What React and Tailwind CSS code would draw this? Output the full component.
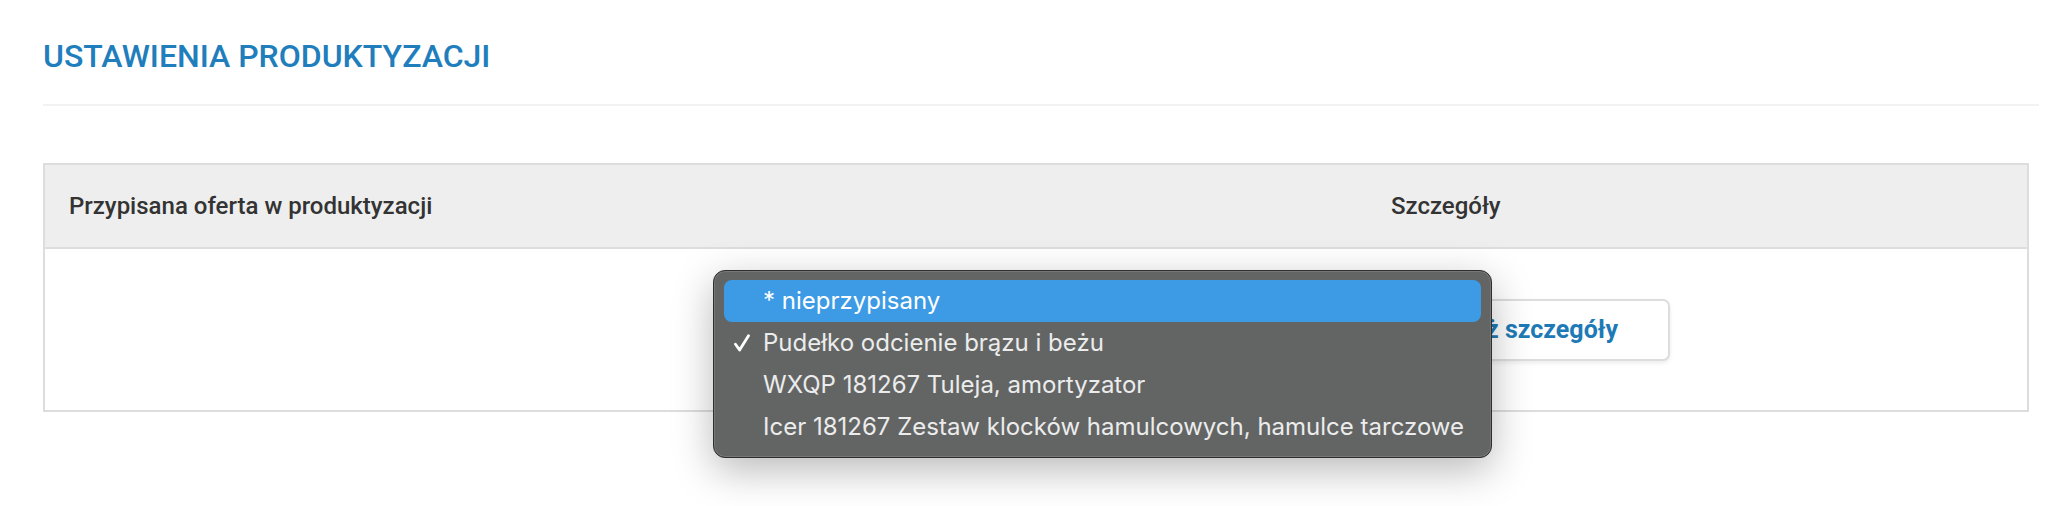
import React from "react";

const items = [
  { label: "* nieprzypisany", active: true },
  { label: "Pudełko odcienie brązu i beżu", checked: true },
  { label: "WXQP 181267 Tuleja, amortyzator" },
  { label: "Icer 181267 Zestaw klocków hamulcowych, hamulce tarczowe" },
];

function Check() {
  return (
    <svg width="18" height="18" viewBox="0 0 18 18" fill="none">
      <path d="M2.5 10.2 L6.6 16 L15.5 1.8" stroke="#ffffff" strokeWidth="2.8" strokeLinecap="round" strokeLinejoin="round" />
    </svg>
  );
}

export default function App() {
  return (
    <div className="relative w-[2072px] h-[506px] bg-white font-['Roboto',sans-serif] overflow-hidden">
      <div className="pl-[43px] pr-[33px] pt-[37px]">
        <h1 className="text-[32px] leading-[38px] font-medium text-[#217ebc]">USTAWIENIA PRODUKTYZACJI</h1>
        <div className="mt-[29px] border-t-2 border-[#f2f2f2]" />
        <div className="mt-[57px] mr-[10px] border-2 border-[#dddddd]">
          <div className="flex h-[84px] items-center bg-[#eeeeee] border-b-2 border-[#dddddd] text-[24px] leading-[30px] font-medium text-[#333333]">
            <div className="w-[1322px] pl-[24px]">Przypisana oferta w produktyzacji</div>
            <div className="flex-1 pl-[24px]">Szczegóły</div>
          </div>
          <div className="flex h-[161px] items-center">
            <div className="w-[1322px]" />
            <div className="flex-1 pl-[24px]">
              <button className="flex h-[62px] w-[279px] items-center justify-end rounded-[7px] border-2 border-[#dddddd] bg-white pr-[50px] text-[25px] font-bold text-[#1e7ab6] shadow-[0_2px_4px_rgba(0,0,0,0.08)]">
                Pokaż szczegóły
              </button>
            </div>
          </div>
        </div>
      </div>

      <div className="absolute left-[713px] top-[270px] w-[779px] h-[188px] rounded-[12px] border border-[#2e2e2e] bg-[#636565] px-[10px] py-[9px] shadow-[0_12px_40px_rgba(0,0,0,0.28),inset_0_0_0_1px_rgba(255,255,255,0.12)] font-['Inter',sans-serif]">
        {items.map((it, i) => (
          <div
            key={i}
            className={
              it.active
                ? "flex h-[42px] items-center rounded-[8px] bg-[#3d9be6] text-white"
                : "flex h-[42px] items-center text-[#ececec]"
            }
          >
            <div className="flex w-[39px] justify-start pl-[9px]">{it.checked ? <Check /> : null}</div>
            <span className="text-[24px] leading-[30px]">{it.label}</span>
          </div>
        ))}
      </div>
    </div>
  );
}
